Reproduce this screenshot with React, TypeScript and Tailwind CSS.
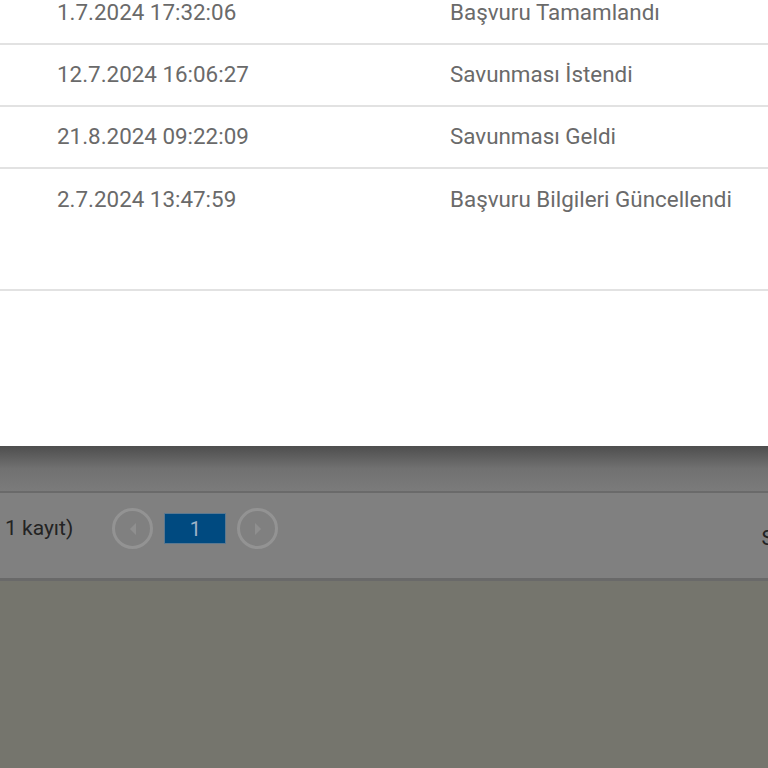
const rows = [
  { date: '1.7.2024 17:32:06', status: 'Başvuru Tamamlandı' },
  { date: '12.7.2024 16:06:27', status: 'Savunması İstendi' },
  { date: '21.8.2024 09:22:09', status: 'Savunması Geldi' },
  { date: '2.7.2024 13:47:59', status: 'Başvuru Bilgileri Güncellendi' },
];

function CircleButton({ dir }: { dir: 'left' | 'right' }) {
  return (
    <div className="flex h-[41px] w-[41px] items-center justify-center rounded-full border-[3px] border-[#939393]">
      <svg width="10" height="14" viewBox="0 0 10 14">
        {dir === 'left' ? (
          <path d="M8 1 L2 7 L8 13 Z" fill="#8f8f8f" />
        ) : (
          <path d="M2 1 L8 7 L2 13 Z" fill="#8f8f8f" />
        )}
      </svg>
    </div>
  );
}

export default function App() {
  return (
    <div
      className="flex h-[768px] w-[768px] flex-col overflow-hidden bg-[#75756d]"
      style={{ fontFamily: 'Roboto, "Noto Sans", sans-serif' }}
    >
      <div className="h-[446px] shrink-0 overflow-hidden bg-white">
        <div className="mt-[-17px]">
          {rows.map((r, i) => {
            const last = i === rows.length - 1;
            return (
              <div
                key={r.date}
                className={`flex border-b-2 border-[#e2e2e2] text-[22.4px] text-[#6a6a6a] ${
                  last ? 'h-[122px] items-start pt-[14px]' : 'h-[62px] items-center'
                }`}
              >
                <div className="w-[450px] shrink-0 pl-[57px]">{r.date}</div>
                <div className="whitespace-nowrap">{r.status}</div>
              </div>
            );
          })}
        </div>
      </div>

      <div className="h-[45px] shrink-0 bg-gradient-to-b from-[#4e4e4e] via-[#717171] to-[#7b7b7b]" />
      <div className="h-[2px] shrink-0 bg-[#6a6a6a]" />

      <div className="flex h-[85px] shrink-0 items-center bg-[#808080] pb-[14px] pl-[5px]">
        <span className="text-[21px] text-[#232323]">1 kayıt)</span>
        <div className="ml-[39px] flex items-center gap-[7px]">
          <CircleButton dir="left" />
          <div className="ml-[4px] flex h-[31px] w-[62px] items-center justify-center border border-[#5b7890] bg-[#004a80] text-[20px] text-[#9fb4c8]">
            1
          </div>
          <div className="ml-[4px]">
            <CircleButton dir="right" />
          </div>
        </div>
        <span className="ml-auto mr-[-6px] mt-[20px] text-[21px] text-[#232323]">S</span>
      </div>

      <div className="h-[3px] shrink-0 bg-[#696969]" />
      <div className="flex-1 bg-[#75756d]" />
    </div>
  );
}
